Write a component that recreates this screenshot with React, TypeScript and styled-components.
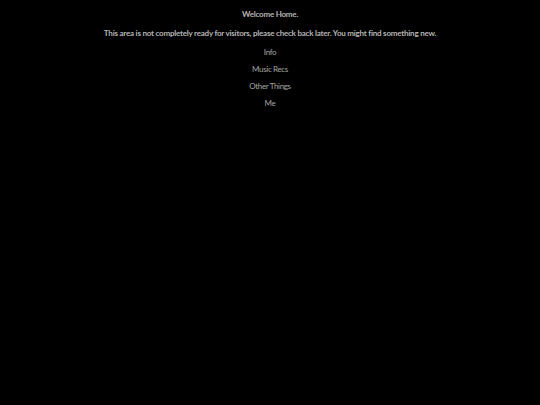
import React from "react";
import styled, { createGlobalStyle } from "styled-components";

const Global = createGlobalStyle`
  html, body { margin: 0; padding: 0; background: #000; }
  body { font-family: Lato, "Noto Sans", sans-serif; }
`;

const Page = styled.main`
  display: flex;
  flex-direction: column;
  align-items: center;
  padding-top: 9px;
  min-height: 405px;
  box-sizing: border-box;
  background: #000;
`;

const Title = styled.h1`
  margin: 0;
  font-size: 8px;
  line-height: 10px;
  font-weight: 700;
  letter-spacing: -0.22px;
  color: #b4b4b4;
`;

const Notice = styled.p`
  margin: 9px 0 0;
  font-size: 8px;
  line-height: 10px;
  font-weight: 700;
  letter-spacing: -0.22px;
  color: #b4b4b4;
`;

const Nav = styled.nav`
  display: flex;
  flex-direction: column;
  align-items: center;
  gap: 7px;
  margin-top: 9px;
`;

const NavLink = styled.a`
  font-size: 8px;
  line-height: 10px;
  letter-spacing: -0.35px;
  color: #a4a4a4;
  text-decoration: none;
`;

export default function App() {
  return (
    <>
      <Global />
      <Page>
        <Title>Welcome Home.</Title>
        <Notice>
          This area is not completely ready for visitors, please check back later. You might find something new.
        </Notice>
        <Nav>
          <NavLink href="#">Info</NavLink>
          <NavLink href="#">Music Recs</NavLink>
          <NavLink href="#">Other Things</NavLink>
          <NavLink href="#">Me</NavLink>
        </Nav>
      </Page>
    </>
  );
}
